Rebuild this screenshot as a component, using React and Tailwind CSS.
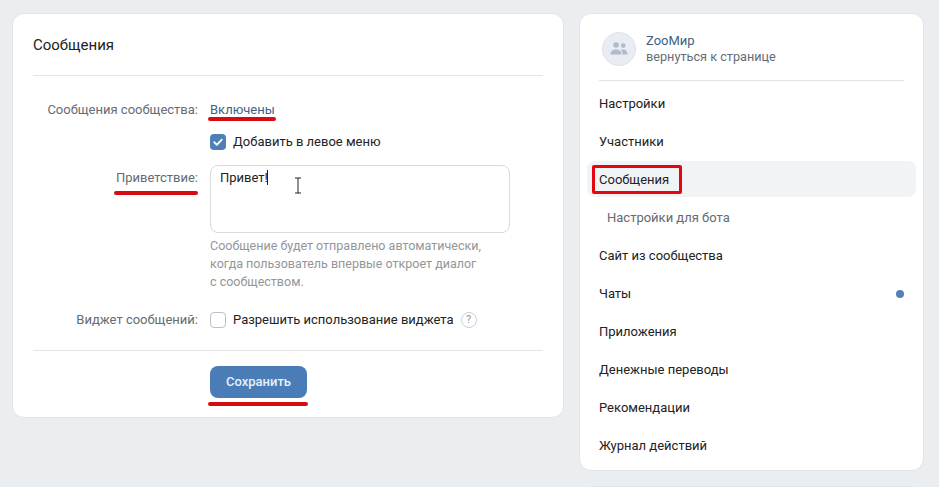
import React from 'react';

const menuItems = [
  { label: 'Настройки' },
  { label: 'Участники' },
  { label: 'Сообщения', active: true },
  { label: 'Настройки для бота', sub: true },
  { label: 'Сайт из сообщества' },
  { label: 'Чаты', dot: true },
  { label: 'Приложения' },
  { label: 'Денежные переводы' },
  { label: 'Рекомендации' },
  { label: 'Журнал действий' },
];

function RedLine({ className }) {
  return <div className={`absolute rounded-full bg-[#d50d12] ${className}`} />;
}

function MenuRow({ item }) {
  return (
    <div className={`relative flex h-[36px] items-center rounded-[8px] px-[12px] pt-[2px] ${item.active ? 'bg-[#f2f3f5]' : ''}`}>
      <span className={item.sub ? 'pl-[8px] text-[#656b73]' : 'text-[#222]'}>{item.label}</span>
      {item.dot && <span className="ml-auto w-[8px] h-[8px] rounded-full bg-[#5181b8]" />}
      {item.active && (
        <div className="absolute left-[5px] top-[4px] w-[90px] h-[29px] border-[3px] border-[#e30611] rounded-[2px]" />
      )}
    </div>
  );
}

export default function App() {
  return (
    <div className="w-[939px] h-[487px] overflow-hidden bg-[#ebeef0] flex items-start gap-[15px] pl-[12px] pt-[13px] font-['Roboto','Liberation_Sans',sans-serif] text-[13px] leading-[18px]">
      {/* Main card */}
      <div className="relative w-[552px] h-[405px] shrink-0 bg-white rounded-[12px] border border-[#e3e4e8] px-[20px]">
        <div className="h-[62px] flex items-center text-[15px] text-[#222] border-b border-[#e3e4e8]">Сообщения</div>

        <div className="flex pt-[25px]">
          <div className="w-[165px] text-right text-[#656b73]">Сообщения сообщества:</div>
          <div className="relative ml-[12px] text-[#3f6185]">
            Включены
            <RedLine className="left-[-2px] top-[16px] w-[68px] h-[4px]" />
          </div>
        </div>

        <div className="flex items-center mt-[14px] ml-[177px] gap-[7px] text-[#222]">
          <span className="w-[16px] h-[16px] rounded-[4px] bg-[#4f7fb5] flex items-center justify-center">
            <svg width="12" height="12" viewBox="0 0 12 12" fill="none">
              <path d="M2.2 6.2 4.8 8.8 9.8 3.6" stroke="white" strokeWidth="1.8" strokeLinecap="round" strokeLinejoin="round" />
            </svg>
          </span>
          Добавить в левое меню
        </div>

        <div className="flex mt-[14px]">
          <div className="relative w-[165px] pt-[4px] text-right text-[#656b73]">
            Приветствие:
            <RedLine className="right-0 top-[26px] w-[84px] h-[4px]" />
          </div>
          <div className="ml-[12px] w-[300px]">
            <div className="relative h-[68px] rounded-[8px] border border-[#d8dade] px-[9px] py-[3px] text-[#222]">
              Привет!
              <span className="absolute left-[56px] top-[4px] w-px h-[15px] bg-[#222]" />
              <svg className="absolute left-[82px] top-[11px]" width="10" height="17" viewBox="0 0 10 17" fill="none">
                <path d="M2 1h6M2 16h6M5 1v15" stroke="#222" strokeWidth="1" />
              </svg>
            </div>
            <div className="mt-[4px] text-[#939699] text-[12.5px] leading-[18px]">
              Сообщение будет отправлено автоматически,
              <br />
              когда пользователь впервые откроет диалог
              <br />
              с сообществом.
            </div>
          </div>
        </div>

        <div className="flex items-center mt-[20px]">
          <div className="w-[165px] text-right text-[#656b73]">Виджет сообщений:</div>
          <div className="ml-[12px] flex items-center gap-[7px] text-[#222]">
            <span className="w-[16px] h-[16px] rounded-[4px] border border-[#b8c1cc] bg-white" />
            Разрешить использование виджета
            <span className="w-[16px] h-[16px] rounded-full border border-[#c5d0db] text-[#939699] text-[11px] leading-[14px] text-center">?</span>
          </div>
        </div>

        <div className="mt-[21px] border-t border-[#e3e4e8] pt-[15px] pl-[177px]">
          <div className="relative w-[97px]">
            <button className="w-[97px] h-[32px] rounded-[8px] bg-[#4a7db8] text-[#e8f0f8] font-medium">Сохранить</button>
            <RedLine className="left-[-2px] top-[36px] w-[100px] h-[4px]" />
          </div>
        </div>
      </div>

      {/* Side menu */}
      <div className="shrink-0 flex flex-col gap-[15px]">
        <div className="w-[345px] h-[458px] bg-white rounded-[12px] border border-[#e3e4e8] px-[7px]">
          <div className="mx-[12px] h-[67px] flex items-center gap-[10px] border-b border-[#e3e4e8] pl-[3px] pt-[3px]">
            <div className="w-[34px] h-[34px] rounded-full bg-[#e9edf3] border border-[#dde3ea] flex items-center justify-center">
              <svg width="18" height="13" viewBox="0 0 18 13" fill="#aebccd">
                <circle cx="6" cy="3" r="2.8" />
                <circle cx="13.2" cy="3.6" r="2.3" />
                <path d="M0.5 12.5c0-3 2-5 5.5-5s5.5 2 5.5 5zM12.5 12.5c0-2-.5-3.6-1.6-4.8.6-.2 1.3-.3 2.1-.3 2.8 0 4.5 1.6 4.5 5.1z" />
              </svg>
            </div>
            <div className="leading-[16px] pt-[1px]">
              <div className="text-[#3f6185]">ZooМир</div>
              <div className="text-[#656b73] text-[12.7px]">вернуться к странице</div>
            </div>
          </div>
          <div className="pt-[4px] flex flex-col gap-[2px]">
            {menuItems.map((item) => (
              <MenuRow key={item.label} item={item} />
            ))}
          </div>
        </div>
        <div className="w-[345px] h-[40px] bg-white rounded-[12px] border border-[#e3e4e8]" />
      </div>
    </div>
  );
}
